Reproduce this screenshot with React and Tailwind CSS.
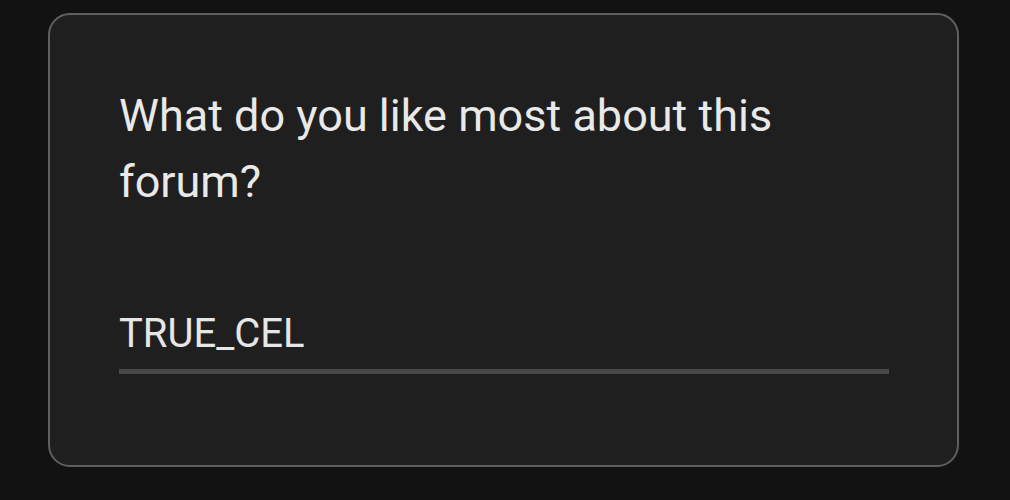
export default function App() {
  return (
    <div className="w-[1010px] h-[500px] bg-[#121212] overflow-hidden pt-[13px] pl-[48px]" style={{ fontFamily: "Roboto, 'Noto Sans', sans-serif" }}>
      <div className="w-[911px] h-[454px] rounded-[22px] border-2 border-[#606062] bg-[#1f1f1f] pl-[69px] pr-[68px] pt-[68px]">
        <div className="text-[45px] leading-[66px] text-[#e9e9e9]">
          What do you like most about this
          <br />
          forum?
        </div>
        <div className="mt-[97px] text-[40px] leading-[44px] text-[#e6e6e6]">TRUE_CEL</div>
        <div className="mt-[13px] h-[5px] bg-[#4a4747]"></div>
      </div>
    </div>
  );
}
